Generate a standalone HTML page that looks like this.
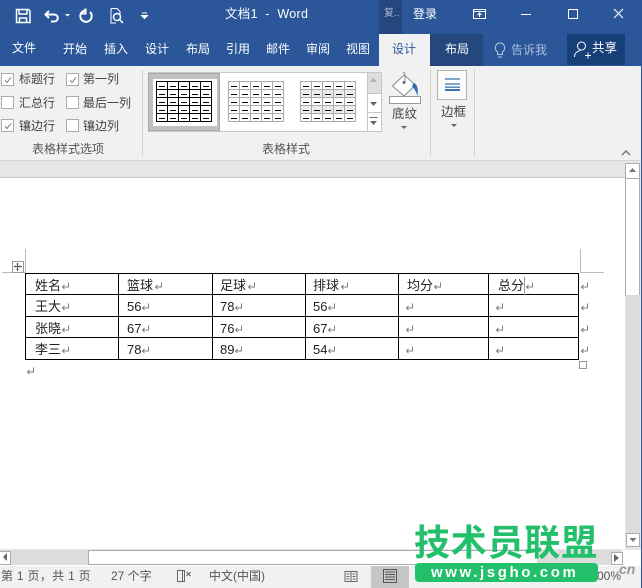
<!DOCTYPE html>
<html><head><meta charset="utf-8"><style>
html,body{margin:0;padding:0}
body{width:642px;height:588px;overflow:hidden;position:relative;background:#fff;font-family:"Liberation Sans","Noto Sans CJK SC",sans-serif;font-size:12px;color:#444}
.a{position:absolute}
.t{position:absolute;white-space:nowrap;line-height:16px}
.w{color:#fff}
.cb{position:absolute;width:11px;height:11px;border:1px solid #ababab;background:#fff}
.cb svg{position:absolute;left:1px;top:1px}
.h{position:absolute;background:#000}
.c{position:absolute;font-size:13px;line-height:20px;color:#222;white-space:nowrap}
.r{position:absolute;width:9px;height:8px}
</style></head><body>
<svg width="0" height="0" style="position:absolute"><defs>
<g id="ret" fill="none" stroke="#808080"><path d="M7.500 .5v4.500h-6M3.500 3l-2 2 2 2"/></g>
<g id="dash" fill="none" stroke="#000"><path d="M3 5.500h6M14 5.500h6M25 5.500h6M36 5.500h6M47 5.500h6M3 13.500h6M14 13.500h6M25 13.500h6M36 13.500h6M47 13.500h6M3 21.500h6M14 21.500h6M25 21.500h6M36 21.500h6M47 21.500h6M3 29.500h6M14 29.500h6M25 29.500h6M36 29.500h6M47 29.500h6M3 37.500h6M14 37.500h6M25 37.500h6M36 37.500h6M47 37.500h6"/></g>
<path id="grid" d="M.5 .5h55v40h-55zM11.500 1v40M22.500 1v40M33.500 1v40M44.500 1v40M1 8.500h55M1 16.500h55M1 24.500h55M1 32.500h55" fill="none"/>
</defs></svg>
<!-- title bar -->
<div class="a" style="left:0;top:0;width:642px;height:66px;background:#2b579a"></div>
<svg class="a" style="left:0;top:0" width="200" height="34" fill="none" stroke="#fff">
<path d="M16.500 9.500h12l1.500 1.500v11.500h-13.500z" stroke-width="1.500"/><path d="M19 10v4h8v-4M19.500 23v-5h7v5" stroke-width="1.500"/>
<path d="M49 11l-3.500 3.500 3.500 3.500M46 14.500h8c5 0 5 7 0 7h-3" stroke-width="2"/>
<path d="M65 14l2.500 2.500 2.500-2.500z" fill="#fff" stroke="none"/>
<path d="M85 10.500a5.700 5.700 0 1 0 5 1.500M85.500 8.500v5h-4" stroke-width="2"/>
<path d="M111 8.500h6l3 3v3M111 8.500v14.500h5" stroke-width="1"/><circle cx="117" cy="17" r="3.500" stroke-width="1.500"/><path d="M119.500 19.500l3.500 3.500" stroke-width="1.500"/>
<path d="M142 13h5M141.500 15.500h6l-3 3z" fill="#fff" stroke-width="1"/>
</svg>
<div class="t w" style="left:225px;top:6px;font-size:12.500px;letter-spacing:.3px">文档1 &nbsp;- &nbsp;Word</div>
<div class="a" style="left:379px;top:0;width:23px;height:34px;background:#24477e"></div>
<div class="t" style="left:384px;top:6px;color:#a9bcd8;font-size:10px">复..</div>
<div class="t w" style="left:413px;top:6px;font-size:12px">登录</div>
<svg class="a" style="left:470px;top:5px" width="172" height="20" fill="none" stroke="#fff">
<rect x="3.500" y="4.500" width="12" height="9"/><path d="M3.500 6.500h12M9.500 12v-4M7.500 10l2-2 2 2"/>
<path d="M51 9.500h10"/><rect x="98.500" y="4.500" width="9" height="9"/><path d="M144 4l9 9M153 4l-9 9" stroke-width="1.100"/>
</svg>
<div class="t w" style="left:12px;top:40px">文件</div>
<div class="t w" style="left:63px;top:41px">开始</div>
<div class="t w" style="left:104px;top:41px">插入</div>
<div class="t w" style="left:145px;top:41px">设计</div>
<div class="t w" style="left:186px;top:41px">布局</div>
<div class="t w" style="left:226px;top:41px">引用</div>
<div class="t w" style="left:266px;top:41px">邮件</div>
<div class="t w" style="left:306px;top:41px">审阅</div>
<div class="t w" style="left:346px;top:41px">视图</div>
<div class="a" style="left:379px;top:34px;width:51px;height:32px;background:#f1f1f1"></div>
<div class="t" style="left:392px;top:41px;color:#2b579a">设计</div>
<div class="a" style="left:430px;top:34px;width:53px;height:32px;background:#24477e"></div>
<div class="t w" style="left:445px;top:41px">布局</div>
<svg class="a" style="left:493px;top:41px" width="14" height="18" fill="none" stroke="#b5c6df"><path d="M4.500 13.500v-2.500c-4-3-2-9 2.500-9s6.500 6 2.500 9v2.500zM5 16h4"/></svg>
<div class="t" style="left:511px;top:42px;color:#a9bcd8">告诉我</div>
<div class="a" style="left:567px;top:34px;width:58px;height:31px;background:#173f78"></div>
<svg class="a" style="left:573px;top:40px" width="20" height="20" fill="none" stroke="#fff"><circle cx="8.500" cy="6" r="4"/><path d="M1.500 17c0-4 3-6 6-6.500M12 15.500h6M15 12.500v6"/></svg>
<div class="t w" style="left:592px;top:40px;font-size:12.500px">共享</div>

<!-- ribbon -->
<div class="a" style="left:0;top:66px;width:641px;height:94px;background:#f1f1f1"></div>
<div class="a" style="left:641px;top:0;width:1px;height:588px;background:#2b579a"></div>
<div class="cb" style="left:1px;top:73px"><svg width="10" height="10" fill="none" stroke="#777"><path d="M2 5l2 2.500 4-5"/></svg></div>
<div class="cb" style="left:66px;top:73px"><svg width="10" height="10" fill="none" stroke="#777"><path d="M2 5l2 2.500 4-5"/></svg></div>
<div class="cb" style="left:1px;top:96px"></div>
<div class="cb" style="left:66px;top:96px"></div>
<div class="cb" style="left:1px;top:119px"><svg width="10" height="10" fill="none" stroke="#777"><path d="M2 5l2 2.500 4-5"/></svg></div>
<div class="cb" style="left:66px;top:119px"></div>
<div class="t" style="left:19px;top:71px">标题行</div>
<div class="t" style="left:83px;top:71px">第一列</div>
<div class="t" style="left:19px;top:95px">汇总行</div>
<div class="t" style="left:83px;top:95px">最后一列</div>
<div class="t" style="left:19px;top:118px">镶边行</div>
<div class="t" style="left:83px;top:118px">镶边列</div>
<div class="t" style="left:32px;top:141px;color:#555">表格样式选项</div>
<div class="a" style="left:142px;top:70px;width:1px;height:86px;background:#d0d0d0"></div>
<!-- gallery -->
<div class="a" style="left:148px;top:72px;width:219px;height:58px;background:#fff;border:1px solid #c6c6c6;border-right:0"></div>
<div class="a" style="left:367px;top:72px;width:13px;height:58px;background:#fff;border:1px solid #c6c6c6"></div>
<div class="a" style="left:368px;top:73px;width:13px;height:20px;background:#dedede"></div>
<div class="a" style="left:368px;top:93px;width:13px;height:1px;background:#c6c6c6"></div>
<div class="a" style="left:368px;top:112px;width:13px;height:1px;background:#c6c6c6"></div>
<svg class="a" style="left:367px;top:73px" width="14" height="56"><path d="M3 9h7l-3.500-4z" fill="#b0b0b0"/><path d="M3 29h7l-3.500 4z" fill="#666"/><path d="M2.500 44h8v1h-8zM3 48h7l-3.500 4z" fill="#666"/></svg>
<div class="a" style="left:148px;top:73px;width:72px;height:58px;background:#c0c0c0;border:1px solid #aaa;box-sizing:border-box"></div>
<div class="a" style="left:153px;top:79px;width:64px;height:47px;background:#fff"></div>
<svg class="a" style="left:148px;top:72px" width="219" height="58" shape-rendering="crispEdges">
<g transform="translate(8 9)"><use href="#grid" stroke="#000"/><use href="#dash"/></g>
<g transform="translate(80 9)"><use href="#grid" stroke="#aaa"/><use href="#dash"/></g>
<rect x="153" y="18" width="55" height="7" fill="#ececec"/><rect x="153" y="34" width="55" height="7" fill="#ececec"/>
<g transform="translate(152 9)"><use href="#grid" stroke="#aaa"/><use href="#dash"/></g>
</svg>
<div class="t" style="left:262px;top:141px;color:#555">表格样式</div>
<!-- shading -->
<svg class="a" style="left:388px;top:71px" width="36" height="36" fill="none">
<path d="M16 4l-11.500 11 11.500 10 11.500-11z" fill="#fff" stroke="#888"/>
<path d="M15 1.500a2 2 0 0 1 2 2v8" stroke="#888"/><circle cx="16" cy="11.500" r="1.500" fill="#666"/>
<path d="M26 12c3 1.500 4.500 5 3.500 13-1.200-4-3-7-5.500-10z" fill="#2b6cb5"/>
<rect x="1.500" y="25.500" width="31" height="7" fill="#fff" stroke="#999"/>
</svg>
<div class="t" style="left:392px;top:106px;font-size:12.500px">底纹</div>
<svg class="a" style="left:400px;top:125px" width="10" height="6"><path d="M1 1h6l-3 3z" fill="#666"/></svg>
<div class="a" style="left:430px;top:70px;width:1px;height:86px;background:#d0d0d0"></div>
<div class="a" style="left:437px;top:70px;width:28px;height:28px;border:1px solid #b5b5b5;background:#fbfbfb"></div>
<svg class="a" style="left:445px;top:78px" width="16" height="14"><path d="M0 1h15M0 6h15" stroke="#3b72b0" stroke-width="1.300"/><rect x="0" y="8.500" width="15" height="1.300" fill="#3b72b0"/><rect x="0" y="11" width="15" height="2" fill="#3b72b0"/></svg>
<div class="t" style="left:441px;top:104px;font-size:12.500px">边框</div>
<svg class="a" style="left:450px;top:123px" width="10" height="6"><path d="M1 1h6l-3 3z" fill="#666"/></svg>
<div class="a" style="left:474px;top:70px;width:1px;height:86px;background:#d0d0d0"></div>
<svg class="a" style="left:620px;top:148px" width="12" height="10" fill="none" stroke="#777" stroke-width="1.500"><path d="M2 7l4-4 4 4"/></svg>

<!-- band under ribbon -->
<div class="a" style="left:0;top:160px;width:641px;height:1px;background:#d4d4d4"></div>
<div class="a" style="left:0;top:161px;width:641px;height:16px;background:#e6e6e6"></div>
<div class="a" style="left:0;top:177px;width:625px;height:1px;background:#c6c6c6"></div>

<!-- crop marks -->
<div class="a" style="left:25px;top:249px;width:1px;height:24px;background:#bbb"></div>
<div class="a" style="left:2px;top:272px;width:23px;height:1px;background:#bbb"></div>
<div class="a" style="left:580px;top:249px;width:1px;height:23px;background:#bbb"></div>
<div class="a" style="left:580px;top:272px;width:24px;height:1px;background:#bbb"></div>
<div class="a" style="left:12px;top:261px;width:10px;height:10px;border:1px solid #999;background:#fff"></div>
<svg class="a" style="left:13px;top:262px" width="10" height="10"><path d="M4.500 1v8M1 4.500h8M3.500 2h2M3.500 7h2M2 3.500v2M7 3.500v2" stroke="#555"/></svg>

<!-- table -->
<div class="h" style="left:25px;top:273px;width:554px;height:1px"></div>
<div class="h" style="left:25px;top:294px;width:554px;height:1px"></div>
<div class="h" style="left:25px;top:316px;width:554px;height:1px"></div>
<div class="h" style="left:25px;top:337px;width:554px;height:1px"></div>
<div class="h" style="left:25px;top:359px;width:554px;height:1px"></div>
<div class="h" style="left:25px;top:273px;width:1px;height:87px"></div>
<div class="h" style="left:118px;top:273px;width:1px;height:87px"></div>
<div class="h" style="left:212px;top:273px;width:1px;height:87px"></div>
<div class="h" style="left:305px;top:273px;width:1px;height:87px"></div>
<div class="h" style="left:398px;top:273px;width:1px;height:87px"></div>
<div class="h" style="left:488px;top:273px;width:1px;height:87px"></div>
<div class="h" style="left:578px;top:273px;width:1px;height:87px"></div>

<div class="c" style="left:35px;top:276px">姓名</div>
<div class="c" style="left:127px;top:276px">篮球</div>
<div class="c" style="left:220px;top:276px">足球</div>
<div class="c" style="left:313px;top:276px">排球</div>
<div class="c" style="left:407px;top:276px">均分</div>
<div class="c" style="left:498px;top:276px">总分</div>
<div class="a" style="left:524px;top:277px;width:1px;height:18px;background:#999"></div>

<div class="c" style="left:35px;top:297px">王大</div>
<div class="c" style="left:127px;top:297px">56</div>
<div class="c" style="left:220px;top:297px">78</div>
<div class="c" style="left:313px;top:297px">56</div>

<div class="c" style="left:35px;top:319px">张晓</div>
<div class="c" style="left:127px;top:319px">67</div>
<div class="c" style="left:220px;top:319px">76</div>
<div class="c" style="left:313px;top:319px">67</div>

<div class="c" style="left:35px;top:340px">李三</div>
<div class="c" style="left:127px;top:340px">78</div>
<div class="c" style="left:220px;top:340px">89</div>
<div class="c" style="left:313px;top:340px">54</div>

<svg class="a" style="left:0;top:270px" width="600" height="110">
<use href="#ret" x="61" y="12"/><use href="#ret" x="154" y="12"/><use href="#ret" x="247" y="12"/><use href="#ret" x="340" y="12"/><use href="#ret" x="433" y="12"/><use href="#ret" x="525" y="12"/><use href="#ret" x="580" y="12"/>
<use href="#ret" x="61" y="33"/><use href="#ret" x="141" y="33"/><use href="#ret" x="234" y="33"/><use href="#ret" x="327" y="33"/><use href="#ret" x="405" y="33"/><use href="#ret" x="495" y="33"/><use href="#ret" x="580" y="33"/>
<use href="#ret" x="61" y="55"/><use href="#ret" x="141" y="55"/><use href="#ret" x="234" y="55"/><use href="#ret" x="327" y="55"/><use href="#ret" x="405" y="55"/><use href="#ret" x="495" y="55"/><use href="#ret" x="580" y="55"/>
<use href="#ret" x="61" y="76"/><use href="#ret" x="141" y="76"/><use href="#ret" x="234" y="76"/><use href="#ret" x="327" y="76"/><use href="#ret" x="405" y="76"/><use href="#ret" x="495" y="76"/><use href="#ret" x="580" y="76"/>
<use href="#ret" x="26" y="97"/>
</svg>
<div class="a" style="left:579px;top:361px;width:6px;height:6px;border:1px solid #999;background:#fff"></div>

<!-- vertical scrollbar -->
<div class="a" style="left:625px;top:161px;width:16px;height:389px;background:#e6e6e6"></div>
<div class="a" style="left:625px;top:163px;width:13px;height:14px;background:#fff;border:1px solid #ababab"></div>
<svg class="a" style="left:626px;top:165px" width="13" height="12"><path d="M3 7h7l-3.500-4z" fill="#777"/></svg>
<div class="a" style="left:625px;top:178px;width:13px;height:116px;background:#fff;border:1px solid #ababab"></div>
<div class="a" style="left:626px;top:295px;width:14px;height:238px;background:#dcdcdc"></div>
<div class="a" style="left:626px;top:533px;width:12px;height:12px;background:#fff;border:1px solid #ababab"></div>
<svg class="a" style="left:627px;top:534px" width="12" height="12"><path d="M2.500 4h7l-3.500 4z" fill="#777"/></svg>

<!-- horizontal scrollbar -->
<div class="a" style="left:0;top:549px;width:625px;height:1px;background:#e8e8e8"></div>
<div class="a" style="left:0;top:550px;width:622px;height:15px;background:#dcdcdc"></div>
<div class="a" style="left:0;top:551px;width:10px;height:12px;background:#fff;border:1px solid #ababab;border-left:0"></div>
<svg class="a" style="left:1px;top:552px" width="8" height="10"><path d="M6 1v8l-4-4z" fill="#666"/></svg>
<div class="a" style="left:88px;top:550px;width:520px;height:13px;background:#fff;border:1px solid #ababab"></div>
<div class="a" style="left:537px;top:550px;width:74px;height:15px;background:#dcdcdc"></div>
<div class="a" style="left:611px;top:552px;width:10px;height:11px;background:#fff;border:1px solid #ababab"></div>
<svg class="a" style="left:612px;top:553px" width="10" height="10"><path d="M2 1v8l5-4z" fill="#666"/></svg>

<!-- status bar -->
<div class="a" style="left:0;top:566px;width:641px;height:22px;background:#f1f1f1"></div>
<div class="t" style="left:1px;top:568px;color:#555;letter-spacing:.3px">第 1 页，共 1 页</div>
<div class="t" style="left:111px;top:568px;color:#555">27 个字</div>
<svg class="a" style="left:176px;top:569px" width="16" height="14" fill="none" stroke="#666"><path d="M1.500 1.500h5v11h-5zM6.500 1.500h2M6.500 12.500h2M8.500 1v12"/><path d="M10.500 3l4 4M14.500 3l-4 4" stroke-width="1.200"/></svg>
<div class="t" style="left:209px;top:568px;color:#555">中文(中国)</div>
<svg class="a" style="left:344px;top:570px" width="15" height="13" fill="none" stroke="#666"><path d="M1 1.500h6v10h-6zM7 1.500h6v10h-6zM2.500 4h3M2.500 6.500h3M2.500 9h3M8.500 4h3M8.500 6.500h3M8.500 9h3"/></svg>
<div class="a" style="left:371px;top:566px;width:38px;height:22px;background:#c6c6c6"></div>
<svg class="a" style="left:382px;top:569px" width="16" height="15" fill="none" stroke="#555"><rect x="1.500" y=".5" width="13" height="13"/><path d="M3 3h10M3 5.500h10M3 8h10M3 10.500h10"/></svg>
<div class="t" style="left:597px;top:568px;color:#555">00%</div>
<div class="t" style="left:619px;top:561px;color:#999;font-style:italic;font-weight:bold;font-size:14px">cn</div>

<!-- watermark -->
<div class="t" style="left:414px;top:518px;font-size:36px;line-height:44px;font-weight:bold;color:#22c06a;letter-spacing:.8px;font-family:'Noto Sans CJK SC',sans-serif">技术员联盟</div>
<div class="a" style="left:415px;top:563px;width:183px;height:19px;background:#22c06a;border-radius:4px"></div>
<div class="t" style="left:431px;top:563px;font-size:15px;line-height:19px;font-weight:bold;color:#fff;letter-spacing:2.6px">www.jsgho.com</div>
</body></html>
